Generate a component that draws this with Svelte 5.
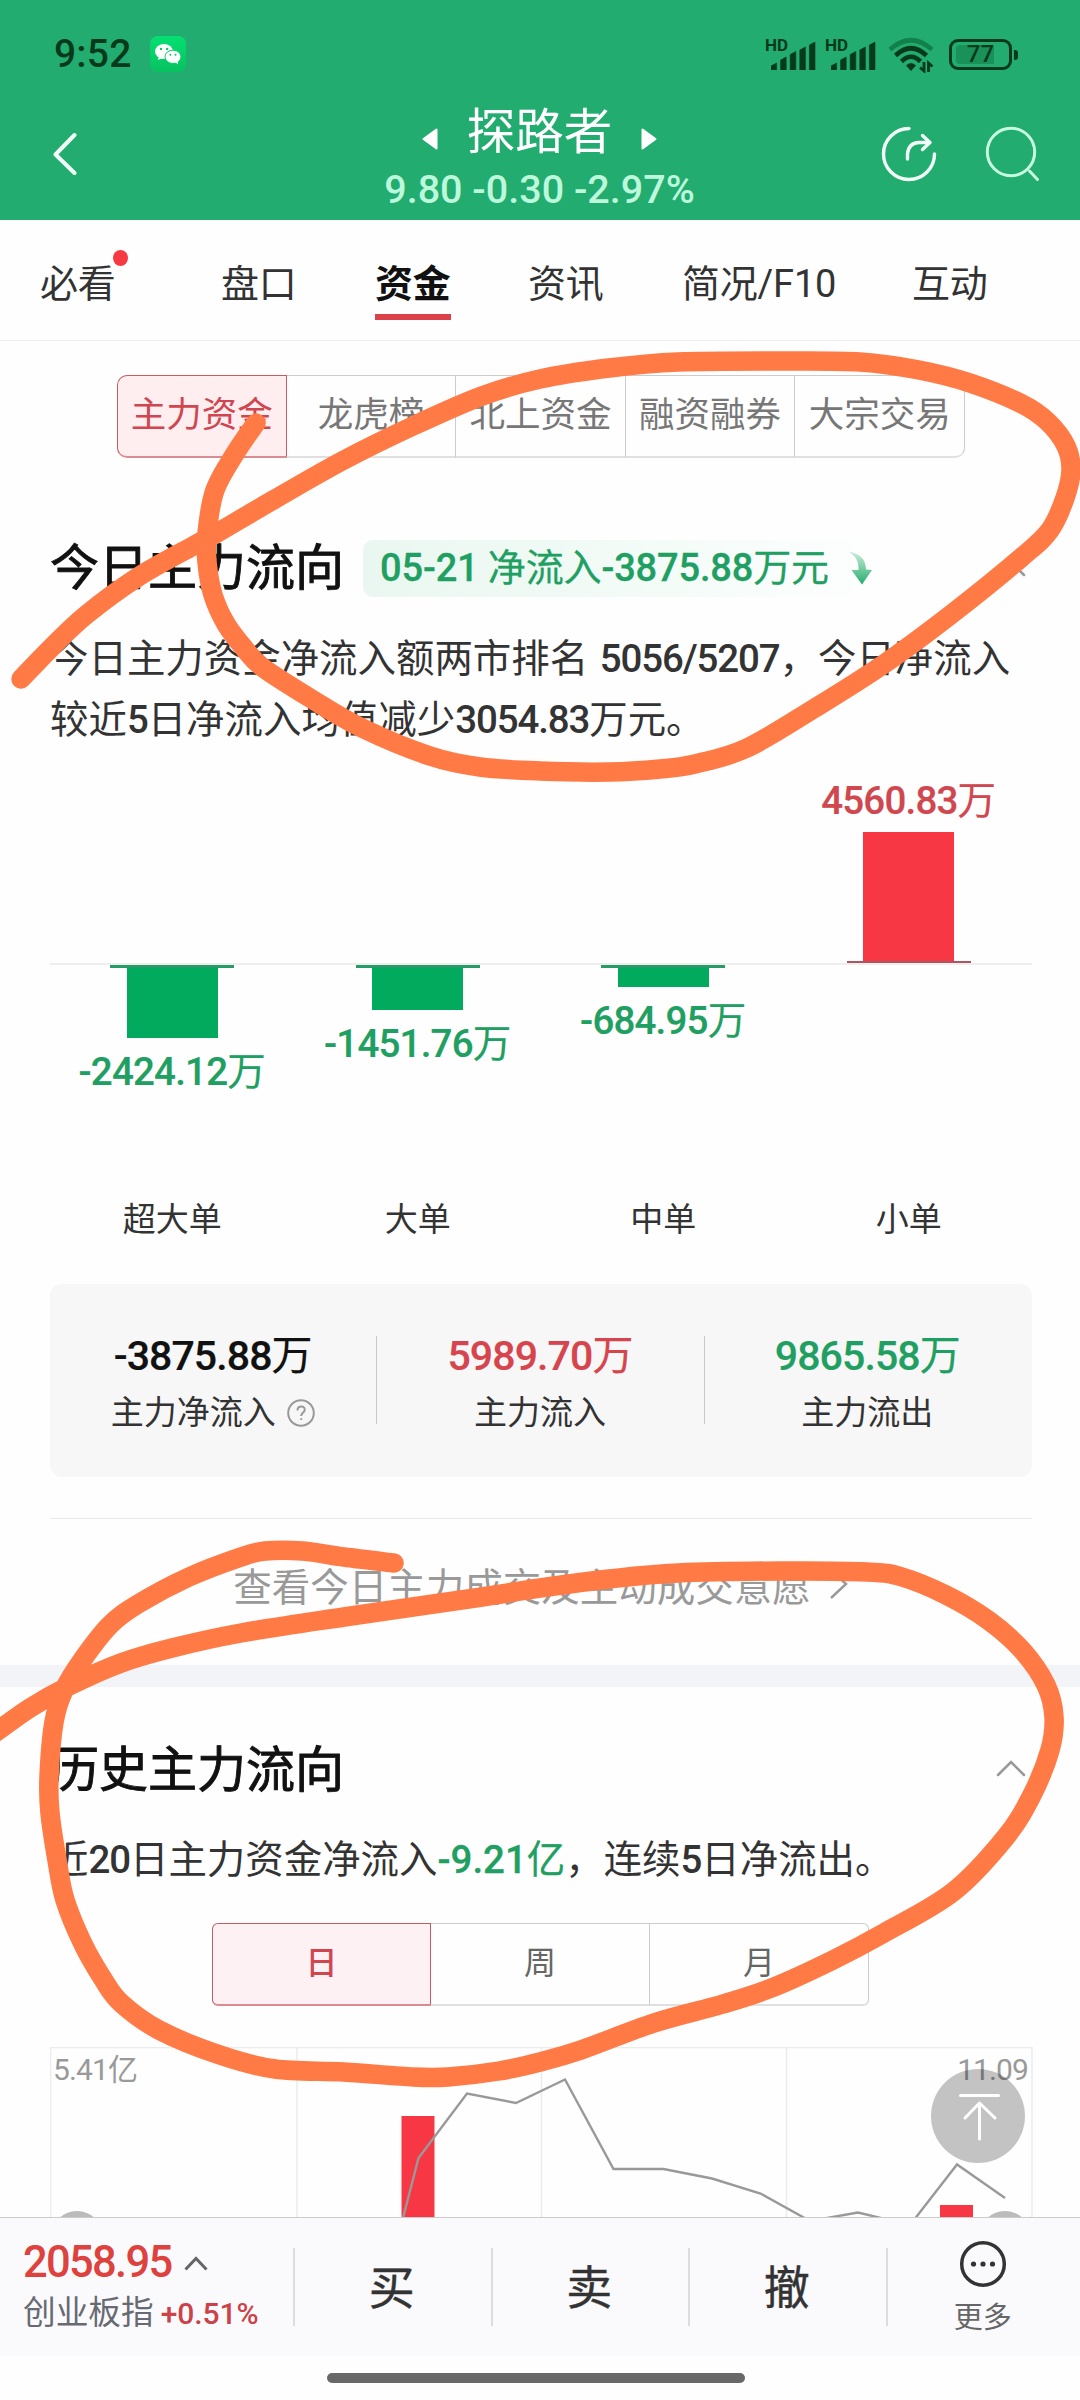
<script>
  const tabs = [
    { label: '必看', dot: true },
    { label: '盘口' },
    { label: '资金', active: true },
    { label: '资讯' },
    { label: '简况/F10' },
    { label: '互动' }
  ];
  const sections = ['主力资金', '龙虎榜', '北上资金', '融资融券', '大宗交易'];
  const periods = ['日', '周', '月'];

  const orders = [
    { name: '超大单', value: '-2424.12', size: 70, up: false },
    { name: '大单', value: '-1451.76', size: 42, up: false },
    { name: '中单', value: '-684.95', size: 19, up: false },
    { name: '小单', value: '4560.83', size: 129, up: true }
  ];
  const totals = [
    { value: '-3875.88', label: '主力净流入', tone: 'plain', help: true },
    { value: '5989.70', label: '主力流入', tone: 'red' },
    { value: '9865.58', label: '主力流出', tone: 'green' }
  ];
  const signal = [7, 13, 18.5, 23, 28];

  // Freehand pen marks, as the points each stroke passes through.
  const marks = [
    [[256,423],[236,452],[215,490],[207,533],[207,562],[213,595],[226,624],[244,648],[262,667],[310,698],[362,728],[430,756],[480,767],[540,771],[609,772],[660,769],[695,764],[747,748],[815,708],[884,664],[953,613],[1022,557],[1050,530],[1065,498],[1071,470],[1066,446],[1048,422],[1022,404],[970,383],[919,370],[860,362],[781,361],[678,362],[609,368],[540,379],[482,396],[413,426],[344,460],[275,499],[217,533],[193,546],[138,577],[86,615],[52,647],[21,679]],
    [[394,1563],[344,1557],[303,1551],[265,1551],[241,1557],[189,1577],[138,1604],[110,1625],[83,1659],[64,1690],[54,1722],[49,1777],[50,1813],[57,1860],[65,1900],[83,1944],[103,1979],[121,2003],[159,2030],[220,2055],[275,2069],[344,2072],[413,2077],[448,2077],[499,2071],[540,2062],[581,2050],[654,2023],[723,2004],[774,1987],[833,1960],[884,1933],[953,1892],[1005,1838],[1032,1795],[1050,1750],[1054,1717],[1046,1685],[1022,1650],[988,1620],[946,1595],[902,1577],[867,1572],[781,1571],[678,1573],[609,1579],[540,1588],[482,1597],[344,1617],[241,1633],[172,1648],[121,1663],[69,1686],[30,1708],[-12,1738]]
  ];

  // Smooth curve through every point (Catmull-Rom to Bezier).
  function smooth(p) {
    let d = `M${p[0][0]} ${p[0][1]}`;
    for (let i = 0; i < p.length - 1; i++) {
      const a = p[i - 1] || p[i], b = p[i], c = p[i + 1], e = p[i + 2] || c;
      d += `C${b[0] + (c[0] - a[0]) / 6} ${b[1] + (c[1] - a[1]) / 6} ${c[0] - (e[0] - b[0]) / 6} ${c[1] - (e[1] - b[1]) / 6} ${c[0]} ${c[1]}`;
    }
    return d;
  }
</script>

<div class="screen">
  <header>
    <div class="status">
      <span class="clock">9:52</span>
      <svg class="wechat" viewBox="0 0 36 36" width="36" height="36">
        <defs><linearGradient id="wc" x1="0" y1="0" x2="0" y2="1"><stop offset="0" stop-color="#05e072" /><stop offset="1" stop-color="#07c160" /></linearGradient></defs>
        <rect width="36" height="36" rx="8" fill="url(#wc)" />
        <ellipse cx="14" cy="15.5" rx="9" ry="7.6" fill="#fff" />
        <path d="M9 20l-1 4 5-2z" fill="#fff" />
        <ellipse cx="23" cy="20.8" rx="8" ry="6.7" fill="#fff" stroke="#06d069" stroke-width="1" />
        <path d="M25 26l3 2.300-.3-4z" fill="#fff" />
        <g fill="#07c863"><circle cx="11" cy="13" r="1.200" /><circle cx="17.200" cy="13" r="1.200" /><circle cx="20.300" cy="18.800" r="1" /><circle cx="25.500" cy="18.800" r="1" /></g>
      </svg>
      <div class="radios">
        {#each [0, 1] as n (n)}
          <div class="sim">
            <span class="hd">HD</span>
            <svg viewBox="0 0 46 28" width="46" height="28">
              {#each signal as h, i (i)}
                <path d="M{i * 9.6} 28V{28 - h + 3}l5.600-3V28z" fill="#063a1b" stroke="#063a1b" stroke-width=".6" stroke-linejoin="round" />
              {/each}
            </svg>
          </div>
        {/each}
        <svg class="wifi" viewBox="0 0 46 36" width="46" height="36" fill="none" stroke-width="4.600">
          <path d="M2 12.500Q23-6 44 12.500" stroke="#12804b" />
          <path d="M7.500 18.500Q23 4 38.500 18.500" stroke="#063a1b" />
          <path d="M13.500 24.500Q23 15 32.500 24.500" stroke="#063a1b" />
          <path d="M23 34l-5-5.500q5-5 10 0z" fill="#063a1b" stroke="none" />
          <path d="M36 25v9l-4-3.500M40.500 35v-9l4 3.500" stroke="#063a1b" stroke-width="2.800" />
        </svg>
        <div class="battery"><i></i><span>77</span></div>
      </div>
    </div>
    <div class="nav">
      <svg class="back" viewBox="0 0 24 44" width="24" height="44"><path d="M21.500 3L2.500 22.500 21.500 41" /></svg>
      <div class="stock">
        <div class="name">
          <svg viewBox="0 0 16 22" width="16" height="22"><path d="M14.500 1.500v19L1.500 11z" /></svg>
          <span>探路者</span>
          <svg viewBox="0 0 16 22" width="16" height="22"><path d="M1.500 1.500v19L14.500 11z" /></svg>
        </div>
        <div class="quote">9.80 -0.30 -2.97%</div>
      </div>
      <div class="tools">
        <svg viewBox="0 0 56 56" width="56" height="56">
          <path d="M28 2.500A25.500 25.500 0 1 0 53.500 28" stroke-width="3.400" />
          <path d="M26.500 33v-5Q27.500 17 38 16.500h10M41.500 9.500l7.500 7-7.500 7" stroke-width="3.400" />
        </svg>
        <svg class="search" viewBox="0 0 56 56" width="56" height="56">
          <circle cx="27" cy="26" r="23.700" />
          <path d="M45.500 45l8 8.500" />
        </svg>
      </div>
    </div>
  </header>

  <nav class="tabs">
    {#each tabs as t (t.label)}
      <span class="tab" class:active={t.active}>{t.label}{#if t.dot}<i></i>{/if}</span>
    {/each}
  </nav>

  <section class="today">
    <div class="segments">
      {#each sections as s, i (s)}
        <span class:on={i === 0}>{s}</span>
      {/each}
    </div>
    <div class="heading">
      <h2>今日主力流向</h2>
      <div class="badge">
        <span><b>05-21</b> 净流入<b>-3875.88</b>万元</span>
        <svg viewBox="0 0 24 34" width="24" height="34">
          <defs><linearGradient id="dn" x1="0" y1="0" x2="0" y2="1"><stop offset="0" stop-color="#c9ecd9" /><stop offset="1" stop-color="#25ad6d" /></linearGradient></defs>
          <path d="M1 1C11 2 18 8 18 18.500l6 .5-10 14.500L3.500 19l7 0C11 11 8 5 1 1z" fill="url(#dn)" />
        </svg>
      </div>
      <svg class="fold" viewBox="0 0 30 18" width="30" height="18"><path d="M2 16L15 3l13 13" /></svg>
    </div>
    <p class="summary">今日主力资金净流入额两市排名 <b>5056/5207</b>，今日净流入<br />较近<b>5</b>日净流入均值减少<b>3054.83</b>万元。</p>

    <div class="bars">
      {#each orders as o (o.name)}
        <div class="col" class:up={o.up}>
          <div class="above">
            {#if o.up}<span class="amount"><b>{o.value}</b>万</span><div class="bar" style="height:{o.size}px"></div><i></i>{/if}
          </div>
          <div class="below">
            {#if !o.up}<i></i><div class="bar" style="height:{o.size}px"></div><span class="amount"><b>{o.value}</b>万</span>{/if}
          </div>
          <span class="kind">{o.name}</span>
        </div>
      {/each}
    </div>

    <div class="totals">
      {#each totals as t (t.label)}
        <div class="total">
          <span class="sum {t.tone}"><b>{t.value}</b>万</span>
          <span class="what">{t.label}{#if t.help}<svg viewBox="0 0 28 28" width="28" height="28"><circle cx="14" cy="14" r="12.800" /><path d="M10.500 11.500q0-4 3.700-4t3.500 3.500c0 2.500-3.500 2.800-3.500 6" /><path d="M14.200 19.300v1.700" /></svg>{/if}</span>
        </div>
      {/each}
    </div>
    <div class="more">
      <span>查看今日主力成交及主动成交意愿</span>
      <svg viewBox="0 0 20 32" width="20" height="32"><path d="M2 2l15 14L2 30" /></svg>
    </div>
  </section>

  <section class="history">
    <div class="heading">
      <h2>历史主力流向</h2>
      <svg class="fold" viewBox="0 0 30 18" width="30" height="18"><path d="M2 16L15 3l13 13" /></svg>
    </div>
    <p class="summary">近<b>20</b>日主力资金净流入<em><b>-9.21</b>亿</em>，连续<b>5</b>日净流出。</p>
    <div class="segments periods">
      {#each periods as p, i (p)}
        <span class:on={i === 0}>{p}</span>
      {/each}
    </div>
    <svg class="trend" viewBox="50 2047 983 170" width="983" height="170">
      <path d="M50.500 2217V2047.500H1032V2217M297 2047V2217M541.500 2047V2217M786.500 2047V2217" fill="none" stroke="#ececec" stroke-width="1.500" />
      <rect x="401.500" y="2116" width="33" height="101" fill="#f73844" />
      <rect x="940" y="2205" width="33" height="12" fill="#f73844" />
      <path d="M402 2222L418.500 2158 467 2093.500 516 2103 565 2079.500 613.500 2169H663.500L712 2178.500 760.500 2193.500 810 2221 858 2212.500 910 2225 957 2164.500 1005 2198" fill="none" stroke="#999" stroke-width="2.400" />
      <circle cx="77" cy="2237" r="26" fill="#bbb" />
      <circle cx="1005" cy="2237" r="26" fill="#bbb" />
      <text x="53" y="2080">5.41亿</text>
      <text x="1028" y="2080" text-anchor="end">11.09</text>
    </svg>
    <div class="totop">
      <svg viewBox="0 0 94 94" width="94" height="94"><path d="M29.500 26.500h38" /><path d="M48.500 70V34.500M34 49l14.500-15L64 49" /></svg>
    </div>
  </section>

  <footer>
    <div class="index">
      <div class="level">2058.95 <svg viewBox="0 0 24 15" width="24" height="15"><path d="M1.500 13.500L12 2.500l10.500 11" /></svg></div>
      <div class="label">创业板指<b>+0.51%</b></div>
    </div>
    <span class="act">买</span>
    <span class="act">卖</span>
    <span class="act">撤</span>
    <div class="act dots">
      <svg viewBox="0 0 48 48" width="48" height="48"><circle cx="24" cy="24" r="21.300" /><g><circle cx="14.500" cy="24" r="2.600" /><circle cx="24" cy="24" r="2.600" /><circle cx="33.500" cy="24" r="2.600" /></g></svg>
      <span>更多</span>
    </div>
  </footer>
  <div class="home"><i></i></div>

  <svg class="ink" viewBox="0 0 1080 2400" width="1080" height="2400">
    {#each marks as m, i (i)}<path d={smooth(m)} />{/each}
  </svg>
</div>

<style>
  :global(body) { margin: 0; background: #fff; }
  .screen {
    position: relative;
    width: 1080px;
    height: 2400px;
    overflow: hidden;
    background: #fefefe;
    font-family: Roboto, 'Noto Sans CJK SC', sans-serif;
    color: #333;
    display: flex;
    flex-direction: column;
  }
  svg { display: block; flex: none; }
  b { font-weight: 500; }

  header { height: 220px; background: #22ac6f; flex: none; }
  .status { height: 108px; box-sizing: border-box; padding: 0 68px 0 54px; display: flex; align-items: center; color: #063a1b; }
  .clock { font-size: 39px; font-weight: 500; line-height: 40px; letter-spacing: .2px; width: 96px; }
  .radios { margin-left: auto; display: flex; align-items: center; }
  .sim { display: flex; width: 60px; height: 32px; position: relative; align-items: flex-end; justify-content: flex-end; box-sizing: border-box; padding-right: 8px; }
  .hd { position: absolute; left: 0; top: -3px; font-size: 17px; line-height: 20px; font-weight: 700; }
  .wifi { margin: 1px 15px 0 3px; }
  .battery { box-sizing: border-box; width: 63px; height: 31px; border: 3px solid #063a1b; border-radius: 9px; position: relative; display: flex; align-items: center; justify-content: center; font-size: 24px; font-weight: 500; }
  .battery span { position: relative; line-height: 26px; }
  .battery i { position: absolute; left: 4px; top: 3px; width: 38px; height: 19px; border-radius: 4px 0 0 4px; background: #199159; }
  .battery::after { content: ''; position: absolute; right: -9px; top: 8px; width: 4px; height: 10px; border-radius: 0 3px 3px 0; background: #063a1b; }

  .nav { display: grid; grid-template-columns: 1fr auto 1fr; padding: 0 40px 0 53px; height: 112px; }
  .nav svg { fill: none; stroke: #f2fff8; stroke-width: 4; stroke-linecap: round; stroke-linejoin: round; }
  .back { margin-top: 24px; }
  .stock { text-align: center; color: #fff; margin-left: -14px; }
  .name { display: flex; align-items: center; justify-content: center; gap: 29px; height: 54px; font-size: 48.500px; line-height: 54px; margin-top: -2px; }
  .name svg { fill: #fff; stroke: #fff; stroke-width: 2; margin-top: 12px; }
  .quote { font-size: 39.500px; font-weight: 500; line-height: 60px; color: #bdf8dc; }
  .tools { display: flex; justify-content: flex-end; gap: 47px; padding-top: 18px; }
  .tools .search { stroke: #c6fde0; stroke-width: 3; }

  .tabs { height: 121px; flex: none; box-sizing: border-box; border-bottom: 1px solid #eee; padding-left: 40px; display: grid; grid-template-columns: 181px 154px 153px 154px 230px 1fr; justify-items: start; font-size: 38px; }
  .tab { position: relative; height: 100px; line-height: 129px; box-sizing: border-box; letter-spacing: -.2px; }
  .tab.active { font-weight: 700; color: #111; border-bottom: 6px solid #dc4049; }
  .tab i { position: absolute; left: 73px; top: 30px; width: 15px; height: 16px; border-radius: 50%; background: #f63a44; }

  .today { height: 1324px; flex: none; box-sizing: border-box; padding: 34px 48px 0 50px; }
  .segments { display: grid; grid-template-columns: repeat(5, 1fr); width: 848px; height: 83px; margin-left: 67px; font-size: 35.500px; color: #777; line-height: 79px; text-align: center; }
  .segments span { box-sizing: border-box; border: 1px solid #ccc; border-left: 0; border-bottom: 2px solid #e0e0e0; }
  .segments span:last-child { border-radius: 0 10px 10px 0; }
  .segments .on { border: 1px solid #c35c63; border-bottom: 2px solid #d98d92; border-radius: 10px 0 0 10px; background: #ffeeef; color: #d14550; }
  .heading { display: flex; align-items: center; height: 60px; }
  .today .heading { margin-top: 80px; }
  h2 { margin: 0; font-size: 49px; font-weight: 400; color: #111; line-height: 64px; -webkit-text-stroke: .9px #111; }
  .today h2 { margin-top: 1px; }
  .badge { display: flex; align-items: center; justify-content: space-between; width: 522px; height: 57px; box-sizing: border-box; margin-left: 19px; padding: 0 13px 0 17px; border-radius: 10px; background: linear-gradient(90deg, #eaf7f0, #f4fcf8 60%, #fefefe); color: #1f9f62; font-size: 38px; line-height: 57px; letter-spacing: -.15px; white-space: nowrap; -webkit-text-stroke: .3px #1f9f62; }
  .fold { margin-left: auto; margin-right: 6px; fill: none; stroke: #999; stroke-width: 2.500; stroke-linecap: round; }
  .summary { margin: 31px -20px 0 0; font-size: 38.450px; line-height: 60.500px; white-space: nowrap; word-spacing: 2px; }
  .summary b { letter-spacing: -1.100px; }
  .summary em { font-style: normal; color: #1f9f62; -webkit-text-stroke: .3px #1f9f62; }
  .summary em b { letter-spacing: 0; }

  .bars { display: grid; grid-template-columns: repeat(4, 245.500px); margin-top: 28px; height: 506px; text-align: center; box-shadow: none; }
  .col { display: flex; flex-direction: column; }
  .above { height: 185px; display: flex; flex-direction: column; align-items: center; justify-content: flex-end; border-bottom: 2px solid #eee; }
  .below { height: 230px; display: flex; flex-direction: column; align-items: center; }
  .bar { width: 91px; background: #02aa5d; flex: none; margin-right: 1px; }
  .below i { flex: none; width: 124px; height: 3px; background: #289c68; margin-right: 1px; }
  .above i { flex: none; width: 124px; height: 2px; background: #ad5560; margin-right: 1px; }
  .amount { font-size: 38.500px; line-height: 60px; color: #1f9f62; letter-spacing: -.8px; margin: 4px 2px 0 0; -webkit-text-stroke: .2px currentColor; }
  .up .bar { background: #f73844; }
  .up .amount { color: #d0474f; margin: 0 2px 1px 0; }
  .kind { font-size: 33px; line-height: 50px; margin-right: 1px; }

  .totals { height: 193px; border-radius: 12px; background: #f7f7f7; display: grid; grid-template-columns: repeat(3, 1fr); }
  .total { display: flex; flex-direction: column; align-items: center; position: relative; padding: 41px 2px 0 0; left: 0; }
  .total + .total::before { content: ''; position: absolute; left: -1px; top: 52px; width: 1px; height: 88px; background: #c8c8c8; }
  .sum { font-size: 41px; line-height: 62px; letter-spacing: -.900px; color: #111; -webkit-text-stroke: .2px currentColor; }
  .sum.red { color: #d6454d; }
  .sum.green { color: #1f9f62; }
  .what { display: flex; align-items: center; gap: 11px; font-size: 33px; line-height: 48px; margin-top: 2px; }
  .what svg { fill: none; stroke: #999; stroke-width: 2; }
  .more { margin-top: 41px; border-top: 1px solid #eaeaea; height: 130px; display: flex; align-items: center; justify-content: center; gap: 18px; font-size: 38.500px; color: #999; }
  .more svg { fill: none; stroke: #999; stroke-width: 2.500; }

  .history { position: relative; flex: none; height: 552px; box-sizing: border-box; border-top: 22px solid #f3f4f8; padding: 51px 47px 0 50px; overflow: hidden; }
  .history .fold { margin-right: 7px; }
  .history h2 { margin-top: 5px; }
  .history .summary { margin-top: 32px; }
  .periods { grid-template-columns: repeat(3, 1fr); width: 657px; font-size: 32px; margin-top: 32px; margin-left: 162px; line-height: 79px; color: #666; }
  .periods span:last-child { border-radius: 0 6px 6px 0; }
  .periods .on { border-radius: 6px 0 0 6px; background: #fdf1f3; font-weight: 500; }
  .trend { margin-top: 41px; }
  .trend text { font-size: 30px; fill: #999; letter-spacing: -.9px; }
  .totop { position: absolute; right: 55px; bottom: 54px; width: 94px; height: 94px; border-radius: 50%; background: rgba(0, 0, 0, .23); }
  .totop svg { fill: none; stroke: #fff; stroke-width: 3; stroke-linecap: round; stroke-linejoin: round; }

  footer { height: 139px; flex: none; box-sizing: border-box; border-top: 1px solid #ccc; background: #fafafd; display: grid; grid-template-columns: 293px repeat(3, 197.500px) 1fr; }
  .index { padding: 17px 0 0 23px; white-space: nowrap; }
  .level { display: flex; align-items: center; gap: 12px; color: #dd423e; font-size: 43.500px; font-weight: 500; line-height: 56px; letter-spacing: -1.700px; }
  .level svg { fill: none; stroke: #666; stroke-width: 3; }
  .label { font-size: 32.700px; line-height: 44px; color: #676a72; display: flex; align-items: baseline; gap: 7px; }
  .label b { font-size: 30px; color: #cc4248; letter-spacing: -.1px; }
  .act { position: relative; text-align: center; font-size: 46px; line-height: 140px; -webkit-text-stroke: .4px #333; }
  .act::before { content: ''; position: absolute; left: 0; top: 30px; width: 2px; height: 78px; background: #dcdcdf; }
  .dots { display: flex; flex-direction: column; align-items: center; padding-top: 22px; font-size: 29px; line-height: 60px; color: #666; -webkit-text-stroke: 0; }
  .dots svg { fill: none; stroke: #333; stroke-width: 3.500; }
  .dots g { fill: #333; stroke: none; }
  .home { flex: 1; display: flex; justify-content: center; padding-top: 17px; background: #fefefe; }
  .home i { width: 418px; height: 10px; border-radius: 5px; background: #686868; margin-right: 8px; }

  .ink { position: absolute; left: 0; top: 0; pointer-events: none; }
  .ink path { fill: none; stroke: #ff7a45; stroke-width: 19.500; stroke-linecap: round; stroke-linejoin: round; }
</style>
